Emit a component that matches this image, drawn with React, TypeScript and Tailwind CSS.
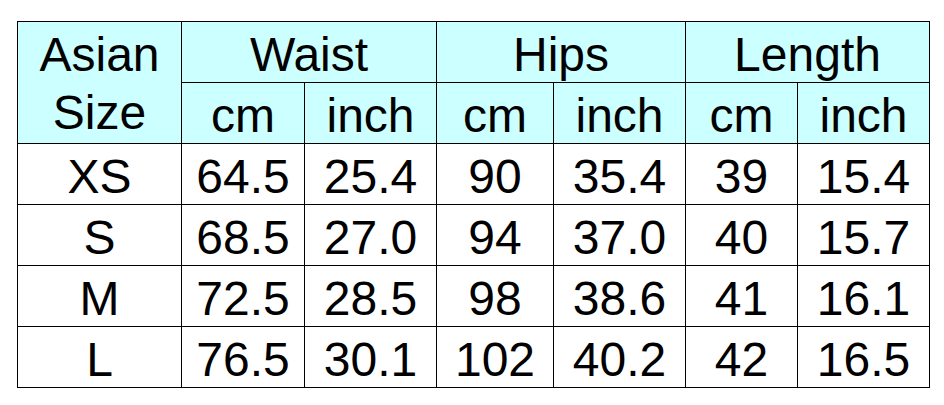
import React from 'react';

const rows = [
  ['XS', '64.5', '25.4', '90', '35.4', '39', '15.4'],
  ['S', '68.5', '27.0', '94', '37.0', '40', '15.7'],
  ['M', '72.5', '28.5', '98', '38.6', '41', '16.1'],
  ['L', '76.5', '30.1', '102', '40.2', '42', '16.5'],
];

const head = 'border border-black bg-[#ccffff] p-0 font-normal text-center align-middle';
const cell = 'border border-black p-0 pt-[6px] leading-none text-center align-middle';

export default function App() {
  return (
    <div
      className="w-[944px] h-[405px] bg-white pt-[21px] pl-[17px] text-black text-[48px]"
      style={{ fontFamily: '"Liberation Sans", Arial, sans-serif' }}
    >
      <table className="table-fixed border-collapse">
        <colgroup>
          <col className="w-[164px]" />
          <col className="w-[123px]" />
          <col className="w-[132px]" />
          <col className="w-[117px]" />
          <col className="w-[132px]" />
          <col className="w-[112px]" />
          <col className="w-[132px]" />
        </colgroup>
        <thead>
          <tr className="h-[61px]">
            <th rowSpan={2} className={`${head} leading-[58px] pt-[2px]`}>
              Asian
              <br />
              Size
            </th>
            <th colSpan={2} className={`${head} leading-none pt-[6px]`}>Waist</th>
            <th colSpan={2} className={`${head} leading-none pt-[6px]`}>Hips</th>
            <th colSpan={2} className={`${head} leading-none pt-[6px]`}>Length</th>
          </tr>
          <tr className="h-[61px]">
            {['cm', 'inch', 'cm', 'inch', 'cm', 'inch'].map((u, i) => (
              <th key={i} className={`${head} leading-none pt-[6px]`}>{u}</th>
            ))}
          </tr>
        </thead>
        <tbody>
          {rows.map((r) => (
            <tr key={r[0]} className="h-[61px]">
              {r.map((v, i) => (
                <td key={i} className={cell}>{v}</td>
              ))}
            </tr>
          ))}
        </tbody>
      </table>
    </div>
  );
}
